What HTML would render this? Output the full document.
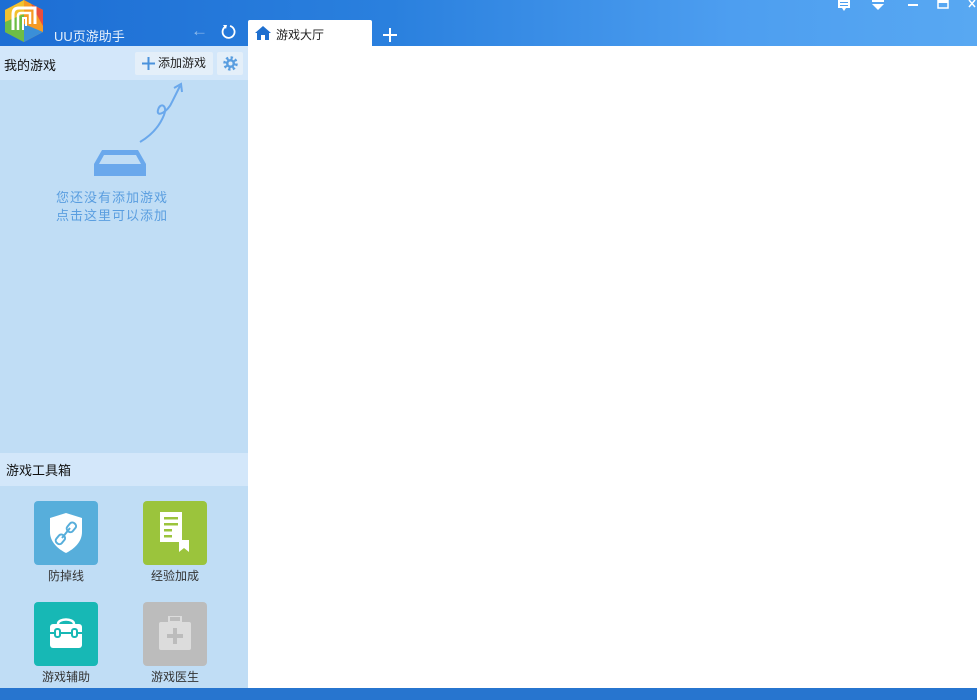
<!DOCTYPE html>
<html><head><meta charset="utf-8"><style>
*{margin:0;padding:0;box-sizing:border-box}
body{width:977px;height:700px;overflow:hidden;position:relative;font-family:"Liberation Sans","Noto Sans CJK SC",sans-serif;background:#fff}
.hdr{position:absolute;left:0;top:0;width:977px;height:46px;background:linear-gradient(90deg,#1d6ed4 0%,#2a80de 40%,#4d9ef0 75%,#58a8f2 100%)}
.side{position:absolute;left:0;top:46px;width:248px;height:642px;background:#c0ddf5}
.sec{position:absolute;left:0;width:248px;background:#d3e7fa;font-size:13px;color:#111}
.bot{position:absolute;left:0;top:688px;width:977px;height:12px;background:#2775cf}
.t{position:absolute;font-size:12px;color:#333;text-align:center;width:80px}
.ic{position:absolute;width:64px;height:64px;border-radius:4px}
</style></head><body>
<div class="hdr"></div>
<svg style="position:absolute;left:3px;top:0" width="42" height="42" viewBox="0 0 42 42">
<polygon points="21,0 40,10 40,32 21,42 2,32 2,10" fill="#f59a23"/>
<polygon points="2,10 21,0 21,14 2,22" fill="#f2c12e"/>
<polygon points="2,22 21,14 21,42 2,32" fill="#6dbd45"/>
<polygon points="21,24 40,32 21,42" fill="#3a8fd8"/>
<polygon points="28,4 40,10 40,26" fill="#e94e3c"/>
<path d="M10 30 L10 14 Q10 8 16 8 L32 8 L32 24" fill="none" stroke="#fff" stroke-width="3"/>
<path d="M15 30 L15 16 Q15 13 18 13 L27 13 L27 24" fill="none" stroke="#fff" stroke-width="2.5"/>
<path d="M20 30 L20 18 L23 18 L23 26" fill="none" stroke="#fff" stroke-width="2"/>
</svg>
<div style="position:absolute;left:54px;top:26px;font-size:13px;color:#e6f0fb">UU页游助手</div>
<div style="position:absolute;left:191px;top:21px;font-size:17px;color:#8fbbec">←</div>
<svg style="position:absolute;left:221px;top:24px" width="15" height="15" viewBox="0 0 15 15"><path d="M4 3 A6 6 0 1 0 9 2" fill="none" stroke="#fff" stroke-width="1.8"/><path d="M2 1 L6 1 L5 5Z" fill="#fff"/></svg>
<div style="position:absolute;left:248px;top:20px;width:124px;height:27px;background:#fff;border-radius:2px 2px 0 0"></div>
<svg style="position:absolute;left:255px;top:26px" width="16" height="14" viewBox="0 0 16 14"><path d="M8 0 L16 7 L14 7 L14 14 L10 14 L10 9 L6 9 L6 14 L2 14 L2 7 L0 7Z" fill="#1e6fcf"/></svg>
<div style="position:absolute;left:276px;top:26px;font-size:12px;color:#222">游戏大厅</div>
<svg style="position:absolute;left:383px;top:28px" width="14" height="14" viewBox="0 0 14 14"><path d="M7 0V14M0 7H14" stroke="#fff" stroke-width="2"/></svg>
<svg style="position:absolute;left:838px;top:0" width="139" height="12" viewBox="0 0 139 12">
<rect x="0" y="0" width="12" height="8" fill="#fff"/><rect x="2" y="2" width="8" height="1" fill="#4d9ef0"/><rect x="2" y="5" width="8" height="1" fill="#4d9ef0"/><path d="M4 8 L6 11 L8 8Z" fill="#fff"/>
<rect x="34" y="0" width="12" height="2" fill="#fff"/><path d="M34 4 L46 4 L40 10Z" fill="#fff"/>
<rect x="70" y="4" width="10" height="2" fill="#fff"/>
<rect x="100" y="0" width="10" height="8" fill="none" stroke="#fff" stroke-width="1.5"/><rect x="100" y="0" width="10" height="3" fill="#fff"/>
<path d="M131 0 L137 7 M137 0 L131 7" stroke="#fff" stroke-width="1.5"/>
</svg>
<div class="side"></div>
<div class="sec" style="top:46px;height:34px"><span style="position:absolute;left:4px;top:9px">我的游戏</span></div>
<div style="position:absolute;left:135px;top:52px;width:78px;height:23px;background:#e4eff9;border-radius:2px;font-size:12px;color:#222;line-height:23px;padding-left:23px">添加游戏</div>
<svg style="position:absolute;left:142px;top:57px" width="13" height="13" viewBox="0 0 13 13"><path d="M6.5 0V13M0 6.5H13" stroke="#4a92dc" stroke-width="2"/></svg>
<div style="position:absolute;left:217px;top:52px;width:26px;height:23px;background:#e4eff9;border-radius:2px"></div>
<svg style="position:absolute;left:222px;top:55px" width="17" height="17" viewBox="0 0 17 17"><circle cx="8.5" cy="8.5" r="5.5" fill="none" stroke="#5a9ee0" stroke-width="3.5" stroke-dasharray="2.2 2.1"/><circle cx="8.5" cy="8.5" r="4.5" fill="#5a9ee0"/><circle cx="8.5" cy="8.5" r="2" fill="#e4eff9"/></svg>
<svg style="position:absolute;left:90px;top:80px" width="100" height="100" viewBox="0 0 100 100">
<path d="M50 62 C62 55 70 45 74 35 C78 25 70 22 68 30 C66 38 78 32 82 22 L90 6" fill="none" stroke="#6aa8ec" stroke-width="2"/>
<path d="M84 8 L91 4 L92 12" fill="none" stroke="#6aa8ec" stroke-width="2"/>
<path d="M4 84 L4 96 L56 96 L56 84 L48 70 L12 70 Z" fill="#6aa8ec"/>
<path d="M9 84 L14 75 L46 75 L51 84 Z" fill="#c0ddf5"/>
<path d="M16 84 L20 88 L40 88 L44 84 Z" fill="#6aa8ec"/>
</svg>
<div style="position:absolute;left:56px;top:189px;font-size:13px;color:#5a9ee0;letter-spacing:1px;line-height:18px">您还没有添加游戏<br>点击这里可以添加</div>
<div class="sec" style="top:453px;height:33px"><span style="position:absolute;left:6px;top:7px">游戏工具箱</span></div>
<div class="ic" style="left:34px;top:501px;background:#57aedb"></div>
<svg style="position:absolute;left:48px;top:512px" width="36" height="42" viewBox="0 0 36 42"><path d="M18 1 L34 6 L34 20 C34 30 26 37 18 41 C10 37 2 30 2 20 L2 6Z" fill="#fff"/><path d="M14 26 L22 16" stroke="#57aedb" stroke-width="2"/><rect x="9" y="22" width="7" height="10" rx="3" transform="rotate(40 12 27)" fill="none" stroke="#57aedb" stroke-width="2"/><rect x="20" y="10" width="7" height="10" rx="3" transform="rotate(40 23 15)" fill="none" stroke="#57aedb" stroke-width="2"/></svg>
<div class="t" style="left:26px;top:567px">防掉线</div>
<div class="ic" style="left:143px;top:501px;background:#9bc43c"></div>
<svg style="position:absolute;left:160px;top:512px" width="30" height="42" viewBox="0 0 30 42"><path d="M0 0 L22 0 L22 28 L29 28 L29 40 L24 36 L19 40 L19 30 L0 30Z" fill="#fff"/><rect x="4" y="5" width="14" height="2.5" fill="#9bc43c"/><rect x="4" y="11" width="14" height="2.5" fill="#9bc43c"/><rect x="4" y="17" width="8" height="2.5" fill="#9bc43c"/><rect x="4" y="23" width="8" height="2.5" fill="#9bc43c"/></svg>
<div class="t" style="left:135px;top:567px">经验加成</div>
<div class="ic" style="left:34px;top:602px;background:#17b8b5"></div>
<svg style="position:absolute;left:48px;top:616px" width="36" height="36" viewBox="0 0 36 36"><path d="M10 8 C10 2 26 2 26 8" fill="none" stroke="#fff" stroke-width="2.5"/><rect x="2" y="8" width="32" height="24" rx="3" fill="#fff"/><path d="M2 17 L34 17" stroke="#17b8b5" stroke-width="2"/><rect x="7" y="13" width="5" height="8" rx="2" fill="#fff" stroke="#17b8b5" stroke-width="2"/><rect x="24" y="13" width="5" height="8" rx="2" fill="#fff" stroke="#17b8b5" stroke-width="2"/></svg>
<div class="t" style="left:26px;top:668px">游戏辅助</div>
<div class="ic" style="left:143px;top:602px;background:#bcbcbc"></div>
<svg style="position:absolute;left:157px;top:616px" width="36" height="38" viewBox="0 0 36 38"><rect x="12" y="0" width="12" height="6" fill="none" stroke="#dcdcdc" stroke-width="2"/><rect x="2" y="6" width="32" height="28" rx="2" fill="#dcdcdc"/><rect x="16" y="12" width="4" height="16" fill="#bcbcbc"/><rect x="10" y="18" width="16" height="4" fill="#bcbcbc"/></svg>
<div class="t" style="left:135px;top:668px">游戏医生</div>
<div class="bot"></div>
</body></html>
